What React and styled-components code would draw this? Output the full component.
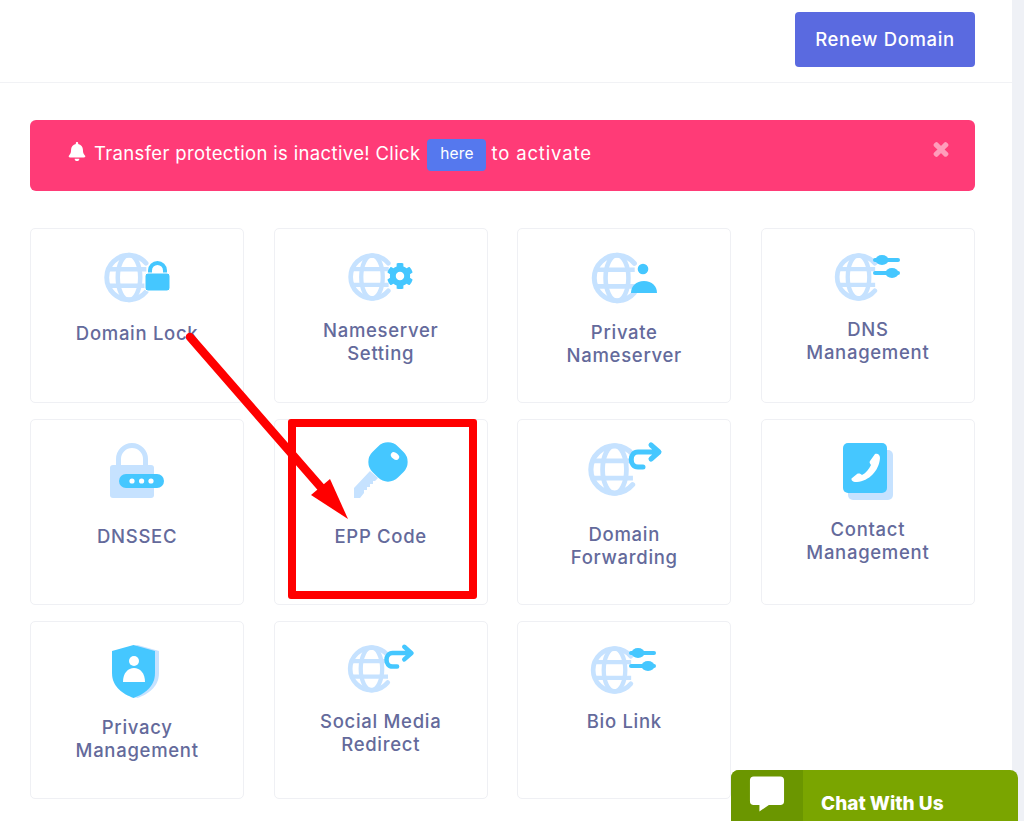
import styled, { createGlobalStyle } from "styled-components";
import { FaBell, FaCog, FaTimes } from "react-icons/fa";

const BLUE = "#45c7ff";
const PALE = "#c6e2ff";

const GlobalStyle = createGlobalStyle`
    html, body {
        margin: 0;
        height: 821px;
        overflow: hidden;
        background: #fff;
        font-family: Inter, "Open Sans", "Liberation Sans", sans-serif;
    }
`

const Shell = styled.div`
    position: relative;
    display: flex;
    height: 821px;
    overflow: hidden;
`

const Main = styled.main`
    width: 1012px;
    flex-shrink: 0;
`

const Rail = styled.div`
    flex: 1;
    background-color: #eff1f6;
`

const TopBar = styled.header`
    height: 83px;
    box-sizing: border-box;
    display: flex;
    justify-content: flex-end;
    padding: 12px 37px 0 0;
    border-bottom: 1px solid #f1f2f5;
`

const RenewButton = styled.button`
    width: 180px;
    height: 55px;
    padding: 0 0 2px;
    border: none;
    border-radius: 4px;
    background-color: #5a6ae0;
    color: #fff;
    font: 500 18.5px Inter, sans-serif;
    letter-spacing: 0.65px;
`

const Content = styled.div`
    padding: 37px 37px 0 30px;
`

const Alert = styled.div`
    height: 71px;
    box-sizing: border-box;
    display: flex;
    align-items: flex-start;
    padding: 19px 26px 0 38px;
    margin-bottom: 37px;
    border-radius: 6px;
    background-color: #ff3b77;
    color: #fff;
    font-size: 18.5px;
    line-height: 28px;
    letter-spacing: 0.35px;
`

const BellIcon = styled(FaBell)`
    width: 18px;
    height: 19px;
    margin: 3px 8px 0 0;
`

const HereLink = styled.a`
    width: 59px;
    height: 32px;
    margin: 0 5px 0 7px;
    border-radius: 4px;
    background-color: #5578ee;
    font-size: 15.5px;
    line-height: 30px;
    letter-spacing: 0.2px;
    text-align: center;
`

const TailText = styled.span`
    letter-spacing: 0.85px;
`

const CloseIcon = styled(FaTimes)`
    width: 16px;
    height: 19px;
    margin: 1px 0 0 auto;
    color: #ff9dbb;
    stroke: currentColor;
    stroke-width: 45;
`

const Grid = styled.div`
    display: grid;
    grid-template-columns: repeat(4, 1fr);
    grid-template-rows: 175px 186px 178px;
    column-gap: 29.3px;
    row-gap: 16px;
`

const Card = styled.div`
    box-sizing: border-box;
    padding-top: 23px;
    border: 1px solid #eff0f4;
    border-radius: 5px;
    background-color: #fff;
    display: flex;
    flex-direction: column;
    align-items: center;
`

const IconBox = styled.div`
    height: ${(p) => p.$height}px;
`

const IconSvg = styled.svg`
    display: block;
    width: 70px;
    height: 60px;
    overflow: visible;
`

const Label = styled.div`
    max-width: 150px;
    color: #646a9b;
    font-size: 18.5px;
    font-weight: 500;
    line-height: 22.5px;
    letter-spacing: 0.7px;
    text-align: center;
`

const Callout = styled.div`
    position: absolute;
    left: 288px;
    top: 419px;
    width: 189px;
    height: 180px;
    box-sizing: border-box;
    border: 8.5px solid #ff0000;
    border-radius: 3px;
`

const ArrowOverlay = styled.svg`
    position: absolute;
    left: 180px;
    top: 325px;
    width: 180px;
    height: 200px;
`

const ChatWidget = styled.div`
    position: absolute;
    right: 6px;
    bottom: 0;
    width: 287px;
    height: 51px;
    display: flex;
    overflow: hidden;
    border-radius: 8px 8px 0 0;
    background-color: #7aa500;
`

const ChatIconBlock = styled.div`
    width: 72px;
    background-color: #6b9600;
    padding: 6px 0 0 18px;
    box-sizing: border-box;
`

const ChatText = styled.div`
    margin: 22px 0 0 18px;
    color: #fff;
    font-size: 19px;
    font-weight: 800;
    line-height: 24px;
`

// globe outline, centred on cx/cy, r is the outer radius in px
const Globe = ({ cx, cy, r }) => (
  <g transform={`translate(${cx} ${cy}) scale(${r / 24})`} fill="none" stroke={PALE}>
    <path d="M16.7 -14A21.8 21.8 0 1 0 16.7 14" strokeWidth="4.8" strokeLinecap="round" />
    <ellipse cx="0" cy="0" rx="11" ry="22" strokeWidth="4.4" />
    <path d="M-20 -8H17M-20 8H17" strokeWidth="4.4" />
  </g>
)

const Sliders = ({ x, y }) => (
  <g transform={`translate(${x} ${y})`} fill={BLUE}>
    <rect x="0" y="-2" width="27" height="4" rx="2" />
    <rect x="0" y="11" width="27" height="4" rx="2" />
    <ellipse cx="9" cy="0" rx="6.5" ry="5" />
    <ellipse cx="19" cy="13" rx="6.5" ry="5" />
  </g>
)

const ForwardArrow = () => (
  <path
    d="M54 24H49C40 24 40 9 49 9H69M62 2L70 9L62 16"
    fill="none"
    stroke={BLUE}
    strokeWidth="5"
    strokeLinecap="round"
    strokeLinejoin="round"
  />
)

const LockIcon = () => (
  <IconSvg viewBox="0 0 70 60">
    <Globe cx={27} cy={25.5} r={24.5} />
    <path d="M48 22V18.5A7.5 7.5 0 0 1 63 18.5V22" fill="none" stroke={BLUE} strokeWidth="4" />
    <rect x="43" y="21" width="25" height="18" rx="3" fill={BLUE} stroke="#fff" strokeWidth="1" />
  </IconSvg>
)

const GearIcon = () => (
  <IconSvg viewBox="0 0 70 60">
    <Globe cx={26} cy={25} r={23.5} />
    <FaCog x={40.5} y={10.5} size={27} color={BLUE} />
  </IconSvg>
)

const PersonIcon = () => (
  <IconSvg viewBox="0 0 70 60">
    <Globe cx={28} cy={26} r={25} />
    <circle cx="54" cy="17" r="5.3" fill={BLUE} />
    <path d="M42 41C42 34 47 29 55 29C63 29 68 34 68 41Z" fill={BLUE} />
  </IconSvg>
)

const DnsIcon = () => (
  <IconSvg viewBox="0 0 70 60">
    <Globe cx={25.5} cy={25} r={23.5} />
    <Sliders x={40} y={8} />
  </IconSvg>
)

const PadlockIcon = () => (
  <IconSvg viewBox="0 0 70 60">
    <path d="M16.5 24V16A13.5 13.5 0 0 1 43.5 16V24" fill="none" stroke={PALE} strokeWidth="5" />
    <rect x="8" y="22" width="44" height="33" rx="3" fill={PALE} />
    <rect x="17" y="31" width="45" height="14" rx="7" fill={BLUE} />
    <circle cx="30" cy="38" r="2.6" fill="#fff" />
    <circle cx="39.6" cy="38" r="2.6" fill="#fff" />
    <circle cx="49" cy="38" r="2.6" fill="#fff" />
  </IconSvg>
)

const KeyIcon = () => (
  <IconSvg viewBox="0 0 70 60">
    <polygon
      points="24,28 32,35 29,38 27,38 27,41 24,41 24,44 21,44 21,47 18,47 18,50 14,55 8,55 8,45"
      fill={PALE}
    />
    <rect x="24" y="1" width="36" height="36" rx="14" transform="rotate(45 42 19)" fill={BLUE} />
    <ellipse cx="49" cy="13" rx="4.6" ry="3.2" transform="rotate(38 49 13)" fill="#fff" />
  </IconSvg>
)

const ForwardIcon = () => (
  <IconSvg viewBox="0 0 70 60">
    <Globe cx={25.5} cy={26.5} r={26} />
    <ForwardArrow />
  </IconSvg>
)

const PhoneIcon = () => (
  <IconSvg viewBox="0 0 70 60">
    <rect x="15" y="7" width="45" height="50" rx="5" fill={PALE} />
    <rect x="10" y="0" width="44" height="50" rx="5" fill={BLUE} />
    <path
      d="M42 11C45 10 47 12 47 15C46 28 36 38 24 39C21 39.5 18 38 18.5 35.5L24 31C26 30 28 31 29 32C33 30 36 26 38 22C37 21 36 19 37 18Z"
      fill="#fff"
    />
  </IconSvg>
)

const ShieldIcon = () => (
  <IconSvg viewBox="0 0 70 60">
    <path d="M35.5 0L57 6V28C57 42 46 49 35.5 53C25 49 14 42 14 28V6Z" fill={PALE} />
    <path d="M31.5 0L53 6V28C53 42 42 49 31.5 53C21 49 10 42 10 28V6Z" fill={BLUE} />
    <circle cx="32" cy="16" r="5" fill="#fff" />
    <path d="M21 37C21 28 26 23 32 23C38 23 43 28 43 37Z" fill="#fff" />
  </IconSvg>
)

const SocialIcon = () => (
  <IconSvg viewBox="0 0 70 60">
    <g transform="translate(2.5 0) scale(0.9)">
      <Globe cx={25.5} cy={26.5} r={26} />
      <ForwardArrow />
    </g>
  </IconSvg>
)

const cards = [
  { label: "Domain Lock", icon: <LockIcon />, box: 70 },
  { label: "Nameserver Setting", icon: <GearIcon />, box: 67 },
  { label: "Private Nameserver", icon: <PersonIcon />, box: 69 },
  { label: "DNS Management", icon: <DnsIcon />, box: 66 },
  { label: "DNSSEC", icon: <PadlockIcon />, box: 82 },
  { label: "EPP Code", icon: <KeyIcon />, box: 82 },
  { label: "Domain Forwarding", icon: <ForwardIcon />, box: 80 },
  { label: "Contact Management", icon: <PhoneIcon />, box: 75 },
  { label: "Privacy Management", icon: <ShieldIcon />, box: 71 },
  { label: "Social Media Redirect", icon: <SocialIcon />, box: 65 },
  { label: "Bio Link", icon: <DnsIcon />, box: 65 },
];

const App = () => {
  return (
    <Shell>
      <GlobalStyle />
      <Main>
        <TopBar>
          <RenewButton>Renew Domain</RenewButton>
        </TopBar>
        <Content>
          <Alert>
            <BellIcon />
            Transfer protection is inactive! Click
            <HereLink>here</HereLink>
            <TailText>to activate</TailText>
            <CloseIcon />
          </Alert>
          <Grid>
            {cards.map((card) => (
              <Card key={card.label}>
                <IconBox $height={card.box}>{card.icon}</IconBox>
                <Label>{card.label}</Label>
              </Card>
            ))}
          </Grid>
        </Content>
      </Main>
      <Rail />
      <Callout />
      <ArrowOverlay viewBox="180 325 180 200">
        <line x1="190" y1="337" x2="325" y2="492" stroke="#ff0000" strokeWidth="8.5" strokeLinecap="round" />
        <polygon points="348,519 330,479 311,495" fill="#ff0000" />
      </ArrowOverlay>
      <ChatWidget>
        <ChatIconBlock>
          <svg width="36" height="37" viewBox="0 0 38 38">
            <path d="M5 0H33A4 4 0 0 1 37 4V26A4 4 0 0 1 33 30H21L11 37V30H5A4 4 0 0 1 1 26V4A4 4 0 0 1 5 0Z" fill="#fff" />
          </svg>
        </ChatIconBlock>
        <ChatText>Chat With Us</ChatText>
      </ChatWidget>
    </Shell>
  )
}

export default App
